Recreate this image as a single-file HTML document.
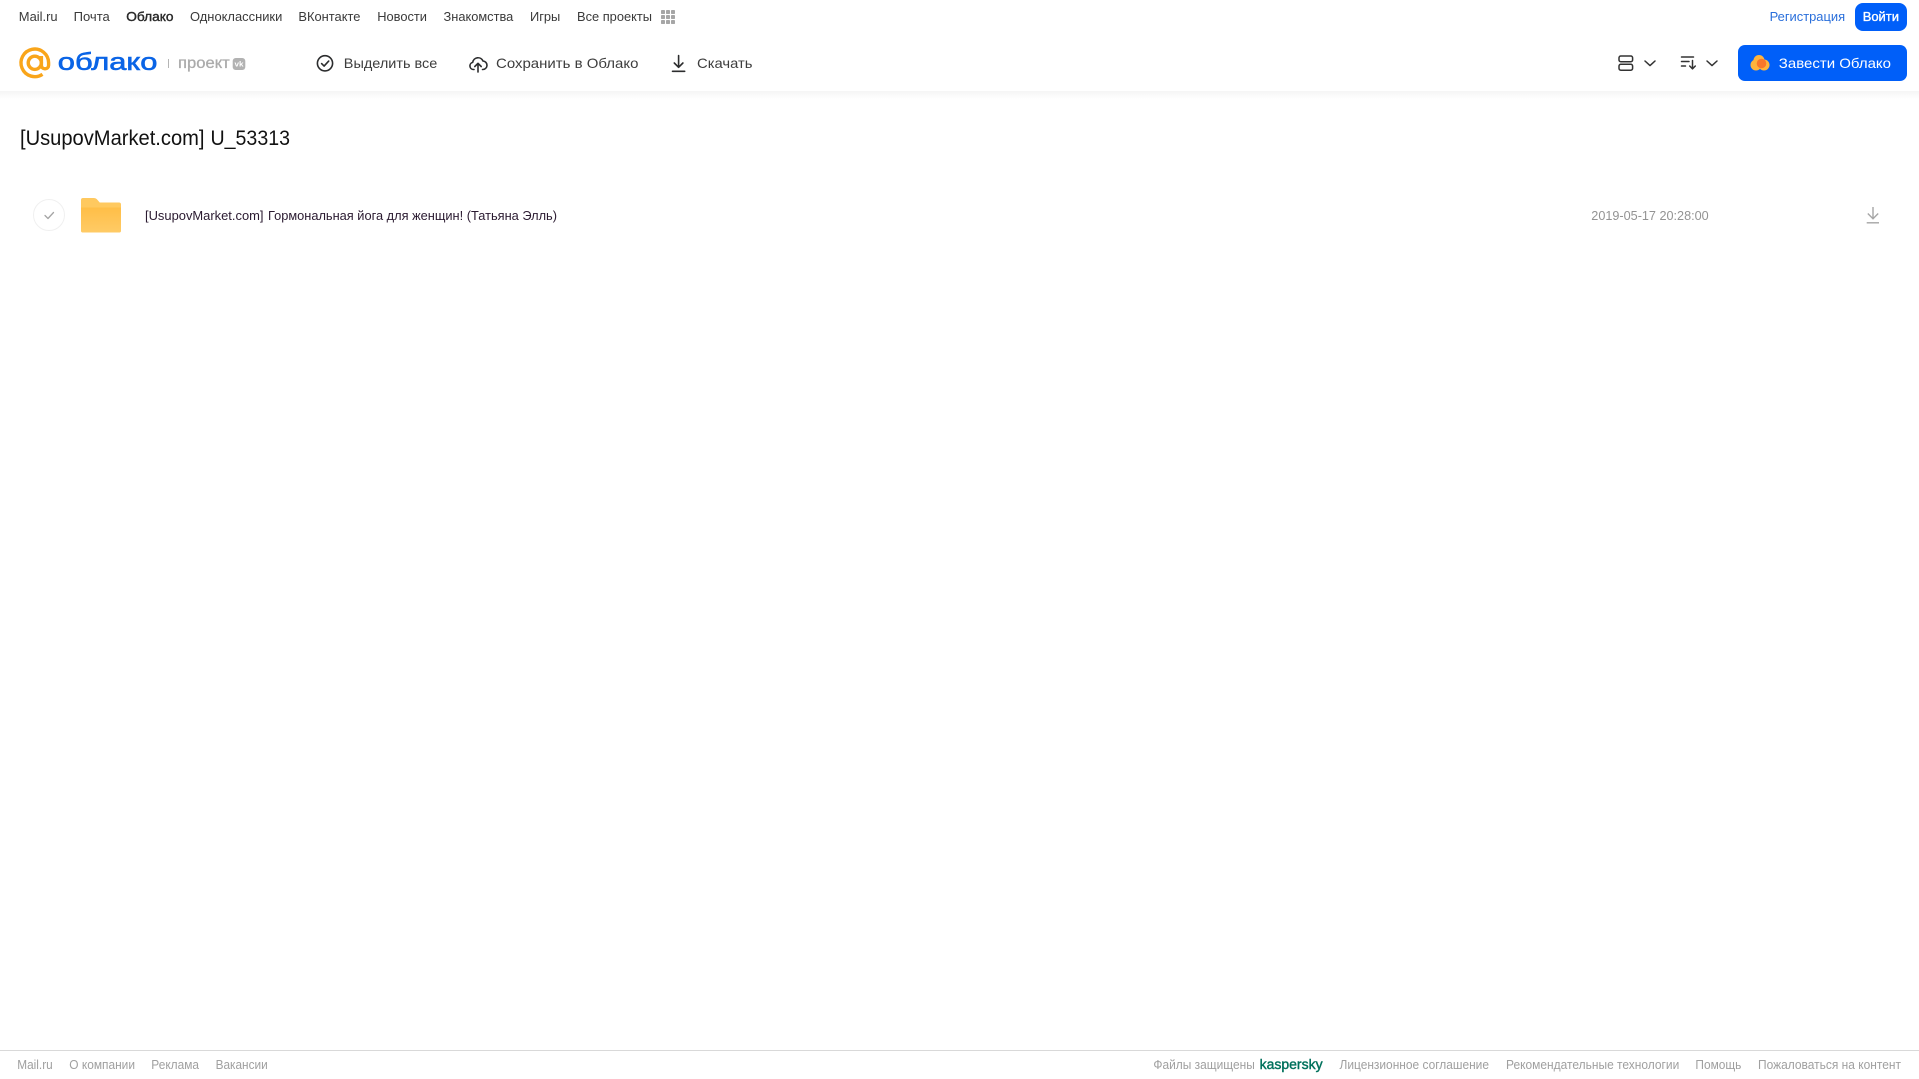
<!DOCTYPE html>
<html lang="ru">
<head>
<meta charset="utf-8">
<title>[UsupovMarket.com] U_53313</title>
<style>
html,body{margin:0;padding:0;width:1919px;height:1079px;background:#fff;overflow:hidden}
#sh{position:absolute;left:0;top:91px;width:1919px;height:8px;background:linear-gradient(#f5f5f5,#fff)}
svg{position:absolute;left:0;top:0;display:block}
text{font-family:"Liberation Sans","Noto Sans CJK SC",sans-serif;white-space:pre}
.n{font-size:13px;fill:#3a3a3a}
.h{font-size:14px;fill:#3d3d3d}
.f{font-size:12.5px;fill:#a0a0a0}
</style>
</head>
<body>
<div id="sh"></div>
<svg width="1919" height="1079" viewBox="0 0 1919 1079" xmlns="http://www.w3.org/2000/svg">
<!-- top nav -->
<text class="n" x="18.8" y="21" textLength="38.8" lengthAdjust="spacingAndGlyphs">Mail.ru</text>
<text class="n" x="73.6" y="21" textLength="36.2" lengthAdjust="spacingAndGlyphs">Почта</text>
<text class="n" x="126.3" y="21" textLength="47.2" lengthAdjust="spacingAndGlyphs" style="fill:#2a2a2a;stroke:#2a2a2a;stroke-width:.4">Облако</text>
<text class="n" x="190" y="21" textLength="92.3" lengthAdjust="spacingAndGlyphs">Одноклассники</text>
<text class="n" x="298.4" y="21" textLength="62" lengthAdjust="spacingAndGlyphs">ВКонтакте</text>
<text class="n" x="377.2" y="21" textLength="49.8" lengthAdjust="spacingAndGlyphs">Новости</text>
<text class="n" x="443.5" y="21" textLength="69.8" lengthAdjust="spacingAndGlyphs">Знакомства</text>
<text class="n" x="530" y="21" textLength="30.3" lengthAdjust="spacingAndGlyphs">Игры</text>
<text class="n" x="577" y="21" textLength="75" lengthAdjust="spacingAndGlyphs">Все проекты</text>
<g fill="#a6a6a6">
<rect x="661" y="10" width="4" height="4" rx=".8"/><rect x="666" y="10" width="4" height="4" rx=".8"/><rect x="671" y="10" width="4" height="4" rx=".8"/>
<rect x="661" y="15" width="4" height="4" rx=".8"/><rect x="666" y="15" width="4" height="4" rx=".8"/><rect x="671" y="15" width="4" height="4" rx=".8"/>
<rect x="661" y="20" width="4" height="4" rx=".8"/><rect x="666" y="20" width="4" height="4" rx=".8"/><rect x="671" y="20" width="4" height="4" rx=".8"/>
</g>
<text class="n" x="1769.6" y="21" textLength="75.5" lengthAdjust="spacingAndGlyphs" style="fill:#2a6fdb">Регистрация</text>
<rect x="1855" y="3" width="52" height="28" rx="8" fill="#005ff9"/>
<text class="n" x="1862.7" y="21" textLength="36.3" lengthAdjust="spacingAndGlyphs" style="fill:#fff;stroke:#fff;stroke-width:.35">Войти</text>

<!-- logo -->
<g fill="none" stroke="#f9a51a" stroke-width="3.4">
<circle cx="34.8" cy="62.8" r="6.6"/>
<path d="M41.4 56V65.2a3.6 3.6 0 0 0 7.2 0V62.8A13.8 13.8 0 1 0 42.5 74.3"/>
</g>
<text x="57.8" y="70" font-size="24" fill="#0a64e6" stroke="#0a64e6" stroke-width=".6" textLength="99.6" lengthAdjust="spacingAndGlyphs">облако</text>
<rect x="168" y="59" width="1" height="9" fill="#b5b5b5"/>
<text x="178" y="68" font-size="15.5" fill="#ababab" stroke="#ababab" stroke-width=".3" textLength="51.8" lengthAdjust="spacingAndGlyphs">проект</text>
<rect x="232.7" y="58" width="12.6" height="12" rx="3" fill="#b2b2b2"/>
<text x="234.5" y="66.6" font-size="7.5" font-weight="700" fill="#fff" textLength="9" lengthAdjust="spacingAndGlyphs">vk</text>

<!-- actions -->
<g fill="none" stroke="#2c2d2e" stroke-width="1.6" stroke-linecap="round" stroke-linejoin="round">
<circle cx="325" cy="63.3" r="7.6"/>
<path d="M321.6 63.6l2.5 2.5 4.6-5"/>
<path d="M474 69.5h-.5a3.6 3.6 0 0 1-.8-7.1 5.4 5.4 0 0 1 10.3-1.4 4.2 4.2 0 0 1-.5 8.5"/>
<path d="M478 72v-8.5M474.8 66.5l3.2-3.2 3.2 3.2"/>
<path d="M678.6 55.5v11.5M674.3 63l4.3 4.3 4.3-4.3M672.5 71.3h12.2"/>
</g>
<text class="h" x="343.8" y="68" textLength="93.5" lengthAdjust="spacingAndGlyphs">Выделить все</text>
<text class="h" x="496" y="68" textLength="142.4" lengthAdjust="spacingAndGlyphs">Сохранить в Облако</text>
<text class="h" x="697" y="68" textLength="55.5" lengthAdjust="spacingAndGlyphs">Скачать</text>

<!-- right tools -->
<g fill="none" stroke="#333" stroke-width="1.5" stroke-linecap="round" stroke-linejoin="round">
<rect x="1619" y="56" width="13.6" height="5.8" rx="1.8"/>
<rect x="1619" y="64.2" width="13.6" height="6" rx="1.8"/>
<path d="M1645 61l5 4.6 5-4.6"/>
<path d="M1707 61l5 4.6 5-4.6"/>
<path d="M1681.5 57h12M1681.5 61.5h7.5M1681.5 66h4"/>
<path d="M1692.5 60.5v8M1689.7 66l2.8 2.8 2.8-2.8"/>
</g>
<rect x="1738" y="45" width="169" height="36" rx="7" fill="#005ff9"/>
<circle cx="1756" cy="65" r="5.5" fill="#ffb43c"/>
<circle cx="1759" cy="60.5" r="5.5" fill="#ffb43c"/>
<circle cx="1764" cy="65" r="5.5" fill="#ffb43c"/>
<circle cx="1761.5" cy="63.5" r="4.8" fill="#f9772b"/>
<text class="h" x="1778.8" y="68" textLength="112.2" lengthAdjust="spacingAndGlyphs" style="fill:#fff">Завести Облако</text>

<!-- title -->
<text x="20" y="145" font-size="21.5" fill="#111" textLength="184.500" lengthAdjust="spacingAndGlyphs">[UsupovMarket.com]</text>
<text x="210.500" y="145" font-size="21.5" fill="#111" textLength="79.500" lengthAdjust="spacingAndGlyphs">U_53313</text>

<!-- row -->
<circle cx="49" cy="215" r="15.5" fill="#fff" stroke="#f0f0f0" stroke-width="1"/>
<path d="M45 215.5l3 3 5.5-6" fill="none" stroke="#a5a5a5" stroke-width="1.3" stroke-linecap="round" stroke-linejoin="round"/>
<defs><linearGradient id="fg" x1="0" y1="0" x2="0" y2="1"><stop offset="0" stop-color="#ffbe47"/><stop offset="1" stop-color="#ffcb66"/></linearGradient></defs>
<path d="M83 198h10c2.5 0 3.5 .6 5 2.5l1.700 2H119a2 2 0 0 1 2 2V230.500a2 2 0 0 1-2 2H83a2 2 0 0 1-2-2V200a2 2 0 0 1 2-2z" fill="#ffc95f"/>
<path d="M81 207.500h40V230.500a2 2 0 0 1-2 2H83a2 2 0 0 1-2-2z" fill="url(#fg)"/>
<text x="145" y="220" font-size="13.2" fill="#2a1a30" textLength="118.500" lengthAdjust="spacingAndGlyphs">[UsupovMarket.com]</text>
<text x="268" y="220" font-size="13.2" fill="#2a1a30" textLength="289" lengthAdjust="spacingAndGlyphs">Гормональная йога для женщин! (Татьяна Элль)</text>
<text x="1591.300" y="220" font-size="13" fill="#939393" textLength="117.400" lengthAdjust="spacingAndGlyphs">2019-05-17 20:28:00</text>
<g fill="none" stroke="#a6a6a6" stroke-width="1.4">
<path d="M1873 207v11.500M1867.800 213.500l5.200 5.200 5.200-5.200"/>
<path d="M1866.700 222.800h12.300"/>
</g>

<!-- footer -->
<rect x="0" y="1050" width="1919" height="1" fill="#d9d9d9"/>
<text class="f" x="17.300" y="1069" textLength="35.400" lengthAdjust="spacingAndGlyphs">Mail.ru</text>
<text class="f" x="69.300" y="1069" textLength="65.700" lengthAdjust="spacingAndGlyphs">О компании</text>
<text class="f" x="151.300" y="1069" textLength="47.700" lengthAdjust="spacingAndGlyphs">Реклама</text>
<text class="f" x="215.600" y="1069" textLength="52.100" lengthAdjust="spacingAndGlyphs">Вакансии</text>
<text class="f" x="1153.400" y="1069" textLength="101.400" lengthAdjust="spacingAndGlyphs">Файлы защищены</text>
<text x="1259.600" y="1069" font-size="13.5" fill="#00715c" stroke="#00715c" stroke-width=".4" textLength="63" lengthAdjust="spacingAndGlyphs">kaspersky</text>
<text class="f" x="1339.500" y="1069" textLength="149.500" lengthAdjust="spacingAndGlyphs">Лицензионное соглашение</text>
<text class="f" x="1506" y="1069" textLength="173.300" lengthAdjust="spacingAndGlyphs">Рекомендательные технологии</text>
<text class="f" x="1695.400" y="1069" textLength="46" lengthAdjust="spacingAndGlyphs">Помощь</text>
<text class="f" x="1758" y="1069" textLength="143" lengthAdjust="spacingAndGlyphs">Пожаловаться на контент</text>
</svg>
</body>
</html>
